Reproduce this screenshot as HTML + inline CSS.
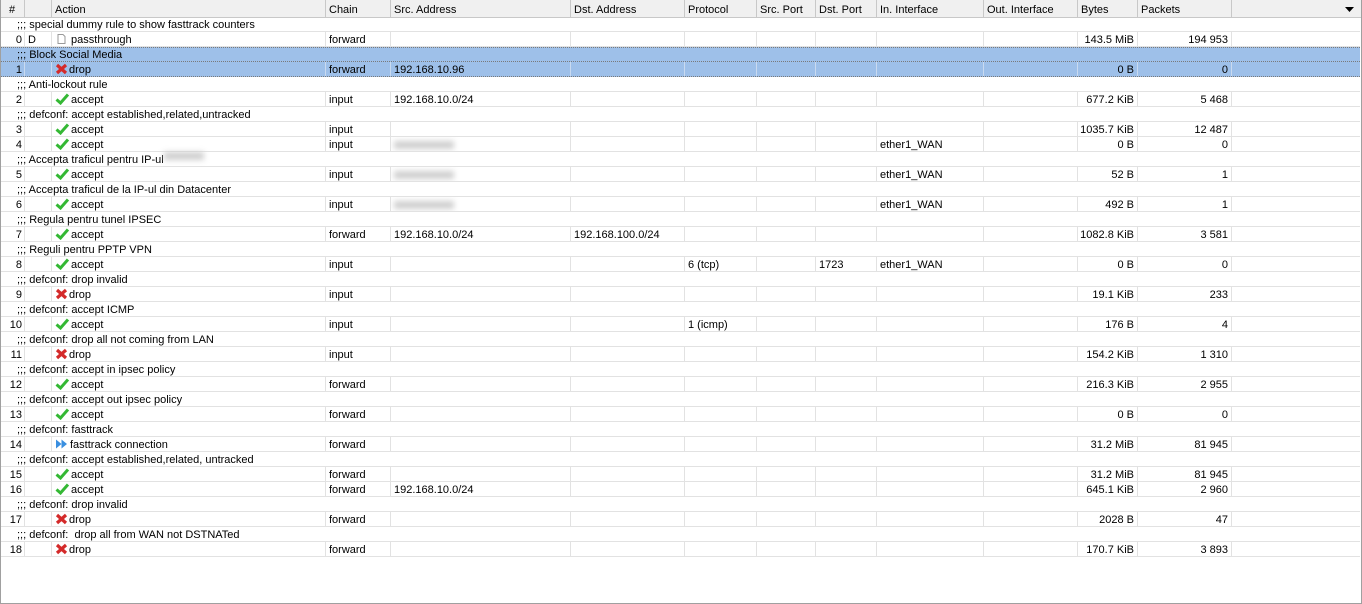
<!DOCTYPE html>
<html><head><meta charset="utf-8"><style>
*{box-sizing:border-box;margin:0;padding:0}
body{width:1362px;height:604px;background:#fff;font-family:"Liberation Sans",Tahoma,sans-serif;font-size:11px;color:#000;overflow:hidden;position:relative}
.frame{position:absolute;left:0;top:0;width:1362px;height:604px;border:1px solid #a0a0a0;border-top:none}
.h{position:absolute;left:0;top:0;height:18px;width:1362px;background:#f0f0f0;border-bottom:1px solid #c8c8c8;display:flex}
.h span{height:17px;line-height:21px;border-right:1px solid #c8c8c8;padding-left:3px;white-space:nowrap;overflow:hidden}
.rows{position:absolute;left:0;top:17px;width:1360px}
.r,.c{height:15px;display:flex;border-bottom:1px solid #e2e2e2;width:1360px}
.r span{height:14px;line-height:17px;border-right:1px solid #e2e2e2;padding-left:3px;white-space:nowrap;overflow:hidden;flex:none}
.c{line-height:16px;padding-left:17px;white-space:nowrap}
.s{background:#9ec0e9;border-bottom:1px dotted #7a7a7a}
.r.s span{border-right-color:#c9daf0}
.c.s{border-top:1px dotted #7a7a7a;line-height:14px}
.w0{width:25px;text-align:right;padding:0 2px 0 0!important}.w1{width:27px}.w2{width:274px}.w3{width:65px}.w4{width:180px}.w5{width:114px}.w6{width:72px}.w7{width:59px}.w8{width:61px}.w9{width:107px}.w10{width:94px}.w11{width:60px;text-align:right;padding:0 3px 0 0!important}.w12{width:94px;text-align:right;padding:0 3px 0 0!important}.w13{width:128px;border-right:none!important}
.a{padding-left:3px!important}
.a svg{vertical-align:-2px;margin-right:1px}
.blur{display:inline-block;width:60px;height:8px;background:#cfcfcf;filter:blur(3px);vertical-align:middle}
</style></head><body>
<div class="h"><span style="width:25px;text-align:center;padding:0">#</span><span style="width:27px"></span><span style="width:274px">Action</span><span style="width:65px">Chain</span><span style="width:180px">Src. Address</span><span style="width:114px">Dst. Address</span><span style="width:72px">Protocol</span><span style="width:59px">Src. Port</span><span style="width:61px">Dst. Port</span><span style="width:107px">In. Interface</span><span style="width:94px">Out. Interface</span><span style="width:60px">Bytes</span><span style="width:94px">Packets</span><span style="width:128px;border:none;position:relative"><svg style="position:absolute;right:6px;top:7px" width="9" height="6"><path d="M0 0H9L4.5 5Z" fill="#000"/></svg></span></div>
<div class="rows">
<div class="c">;;; special dummy rule to show fasttrack counters</div>
<div class="r"><span class="w0">0</span><span class="w1">D</span><span class="w2 a"><svg width="12" height="12"><path d="M3 1.5H8L10 3.5V10.5H3Z" fill="#fff" stroke="#9a9a9a"/></svg> passthrough</span><span class="w3">forward</span><span class="w4"></span><span class="w5"></span><span class="w6"></span><span class="w7"></span><span class="w8"></span><span class="w9"></span><span class="w10"></span><span class="w11">143.5 MiB</span><span class="w12">194 953</span><span class="w13"></span></div>
<div class="c s">;;; Block Social Media</div>
<div class="r s"><span class="w0">1</span><span class="w1"></span><span class="w2 a"><svg width="13" height="12"><path d="M2 2L11 10M11 2L2 10" stroke="#d42a2a" stroke-width="3.2"/></svg>drop</span><span class="w3">forward</span><span class="w4">192.168.10.96</span><span class="w5"></span><span class="w6"></span><span class="w7"></span><span class="w8"></span><span class="w9"></span><span class="w10"></span><span class="w11">0 B</span><span class="w12">0</span><span class="w13"></span></div>
<div class="c">;;; Anti-lockout rule</div>
<div class="r"><span class="w0">2</span><span class="w1"></span><span class="w2 a"><svg width="15" height="12"><path d="M1.5 6.5L5.5 10L13 1.5" stroke="#34b834" stroke-width="3" fill="none"/></svg>accept</span><span class="w3">input</span><span class="w4">192.168.10.0/24</span><span class="w5"></span><span class="w6"></span><span class="w7"></span><span class="w8"></span><span class="w9"></span><span class="w10"></span><span class="w11">677.2 KiB</span><span class="w12">5 468</span><span class="w13"></span></div>
<div class="c">;;; defconf: accept established,related,untracked</div>
<div class="r"><span class="w0">3</span><span class="w1"></span><span class="w2 a"><svg width="15" height="12"><path d="M1.5 6.5L5.5 10L13 1.5" stroke="#34b834" stroke-width="3" fill="none"/></svg>accept</span><span class="w3">input</span><span class="w4"></span><span class="w5"></span><span class="w6"></span><span class="w7"></span><span class="w8"></span><span class="w9"></span><span class="w10"></span><span class="w11">1035.7 KiB</span><span class="w12">12 487</span><span class="w13"></span></div>
<div class="r"><span class="w0">4</span><span class="w1"></span><span class="w2 a"><svg width="15" height="12"><path d="M1.5 6.5L5.5 10L13 1.5" stroke="#34b834" stroke-width="3" fill="none"/></svg>accept</span><span class="w3">input</span><span class="w4"><i class="blur"></i></span><span class="w5"></span><span class="w6"></span><span class="w7"></span><span class="w8"></span><span class="w9">ether1_WAN</span><span class="w10"></span><span class="w11">0 B</span><span class="w12">0</span><span class="w13"></span></div>
<div class="c">;;; Accepta traficul pentru IP-ul <i class="blur" style="width:40px"></i></div>
<div class="r"><span class="w0">5</span><span class="w1"></span><span class="w2 a"><svg width="15" height="12"><path d="M1.5 6.5L5.5 10L13 1.5" stroke="#34b834" stroke-width="3" fill="none"/></svg>accept</span><span class="w3">input</span><span class="w4"><i class="blur"></i></span><span class="w5"></span><span class="w6"></span><span class="w7"></span><span class="w8"></span><span class="w9">ether1_WAN</span><span class="w10"></span><span class="w11">52 B</span><span class="w12">1</span><span class="w13"></span></div>
<div class="c">;;; Accepta traficul de la IP-ul din Datacenter</div>
<div class="r"><span class="w0">6</span><span class="w1"></span><span class="w2 a"><svg width="15" height="12"><path d="M1.5 6.5L5.5 10L13 1.5" stroke="#34b834" stroke-width="3" fill="none"/></svg>accept</span><span class="w3">input</span><span class="w4"><i class="blur"></i></span><span class="w5"></span><span class="w6"></span><span class="w7"></span><span class="w8"></span><span class="w9">ether1_WAN</span><span class="w10"></span><span class="w11">492 B</span><span class="w12">1</span><span class="w13"></span></div>
<div class="c">;;; Regula pentru tunel IPSEC</div>
<div class="r"><span class="w0">7</span><span class="w1"></span><span class="w2 a"><svg width="15" height="12"><path d="M1.5 6.5L5.5 10L13 1.5" stroke="#34b834" stroke-width="3" fill="none"/></svg>accept</span><span class="w3">forward</span><span class="w4">192.168.10.0/24</span><span class="w5">192.168.100.0/24</span><span class="w6"></span><span class="w7"></span><span class="w8"></span><span class="w9"></span><span class="w10"></span><span class="w11">1082.8 KiB</span><span class="w12">3 581</span><span class="w13"></span></div>
<div class="c">;;; Reguli pentru PPTP VPN</div>
<div class="r"><span class="w0">8</span><span class="w1"></span><span class="w2 a"><svg width="15" height="12"><path d="M1.5 6.5L5.5 10L13 1.5" stroke="#34b834" stroke-width="3" fill="none"/></svg>accept</span><span class="w3">input</span><span class="w4"></span><span class="w5"></span><span class="w6">6 (tcp)</span><span class="w7"></span><span class="w8">1723</span><span class="w9">ether1_WAN</span><span class="w10"></span><span class="w11">0 B</span><span class="w12">0</span><span class="w13"></span></div>
<div class="c">;;; defconf: drop invalid</div>
<div class="r"><span class="w0">9</span><span class="w1"></span><span class="w2 a"><svg width="13" height="12"><path d="M2 2L11 10M11 2L2 10" stroke="#d42a2a" stroke-width="3.2"/></svg>drop</span><span class="w3">input</span><span class="w4"></span><span class="w5"></span><span class="w6"></span><span class="w7"></span><span class="w8"></span><span class="w9"></span><span class="w10"></span><span class="w11">19.1 KiB</span><span class="w12">233</span><span class="w13"></span></div>
<div class="c">;;; defconf: accept ICMP</div>
<div class="r"><span class="w0">10</span><span class="w1"></span><span class="w2 a"><svg width="15" height="12"><path d="M1.5 6.5L5.5 10L13 1.5" stroke="#34b834" stroke-width="3" fill="none"/></svg>accept</span><span class="w3">input</span><span class="w4"></span><span class="w5"></span><span class="w6">1 (icmp)</span><span class="w7"></span><span class="w8"></span><span class="w9"></span><span class="w10"></span><span class="w11">176 B</span><span class="w12">4</span><span class="w13"></span></div>
<div class="c">;;; defconf: drop all not coming from LAN</div>
<div class="r"><span class="w0">11</span><span class="w1"></span><span class="w2 a"><svg width="13" height="12"><path d="M2 2L11 10M11 2L2 10" stroke="#d42a2a" stroke-width="3.2"/></svg>drop</span><span class="w3">input</span><span class="w4"></span><span class="w5"></span><span class="w6"></span><span class="w7"></span><span class="w8"></span><span class="w9"></span><span class="w10"></span><span class="w11">154.2 KiB</span><span class="w12">1 310</span><span class="w13"></span></div>
<div class="c">;;; defconf: accept in ipsec policy</div>
<div class="r"><span class="w0">12</span><span class="w1"></span><span class="w2 a"><svg width="15" height="12"><path d="M1.5 6.5L5.5 10L13 1.5" stroke="#34b834" stroke-width="3" fill="none"/></svg>accept</span><span class="w3">forward</span><span class="w4"></span><span class="w5"></span><span class="w6"></span><span class="w7"></span><span class="w8"></span><span class="w9"></span><span class="w10"></span><span class="w11">216.3 KiB</span><span class="w12">2 955</span><span class="w13"></span></div>
<div class="c">;;; defconf: accept out ipsec policy</div>
<div class="r"><span class="w0">13</span><span class="w1"></span><span class="w2 a"><svg width="15" height="12"><path d="M1.5 6.5L5.5 10L13 1.5" stroke="#34b834" stroke-width="3" fill="none"/></svg>accept</span><span class="w3">forward</span><span class="w4"></span><span class="w5"></span><span class="w6"></span><span class="w7"></span><span class="w8"></span><span class="w9"></span><span class="w10"></span><span class="w11">0 B</span><span class="w12">0</span><span class="w13"></span></div>
<div class="c">;;; defconf: fasttrack</div>
<div class="r"><span class="w0">14</span><span class="w1"></span><span class="w2 a"><svg width="14" height="12"><path d="M1 1.5L6.5 6L1 10.5ZM6.5 1.5L12 6L6.5 10.5Z" fill="#3a8fe0"/></svg>fasttrack connection</span><span class="w3">forward</span><span class="w4"></span><span class="w5"></span><span class="w6"></span><span class="w7"></span><span class="w8"></span><span class="w9"></span><span class="w10"></span><span class="w11">31.2 MiB</span><span class="w12">81 945</span><span class="w13"></span></div>
<div class="c">;;; defconf: accept established,related, untracked</div>
<div class="r"><span class="w0">15</span><span class="w1"></span><span class="w2 a"><svg width="15" height="12"><path d="M1.5 6.5L5.5 10L13 1.5" stroke="#34b834" stroke-width="3" fill="none"/></svg>accept</span><span class="w3">forward</span><span class="w4"></span><span class="w5"></span><span class="w6"></span><span class="w7"></span><span class="w8"></span><span class="w9"></span><span class="w10"></span><span class="w11">31.2 MiB</span><span class="w12">81 945</span><span class="w13"></span></div>
<div class="r"><span class="w0">16</span><span class="w1"></span><span class="w2 a"><svg width="15" height="12"><path d="M1.5 6.5L5.5 10L13 1.5" stroke="#34b834" stroke-width="3" fill="none"/></svg>accept</span><span class="w3">forward</span><span class="w4">192.168.10.0/24</span><span class="w5"></span><span class="w6"></span><span class="w7"></span><span class="w8"></span><span class="w9"></span><span class="w10"></span><span class="w11">645.1 KiB</span><span class="w12">2 960</span><span class="w13"></span></div>
<div class="c">;;; defconf: drop invalid</div>
<div class="r"><span class="w0">17</span><span class="w1"></span><span class="w2 a"><svg width="13" height="12"><path d="M2 2L11 10M11 2L2 10" stroke="#d42a2a" stroke-width="3.2"/></svg>drop</span><span class="w3">forward</span><span class="w4"></span><span class="w5"></span><span class="w6"></span><span class="w7"></span><span class="w8"></span><span class="w9"></span><span class="w10"></span><span class="w11">2028 B</span><span class="w12">47</span><span class="w13"></span></div>
<div class="c">;;; defconf:&nbsp; drop all from WAN not DSTNATed</div>
<div class="r"><span class="w0">18</span><span class="w1"></span><span class="w2 a"><svg width="13" height="12"><path d="M2 2L11 10M11 2L2 10" stroke="#d42a2a" stroke-width="3.2"/></svg>drop</span><span class="w3">forward</span><span class="w4"></span><span class="w5"></span><span class="w6"></span><span class="w7"></span><span class="w8"></span><span class="w9"></span><span class="w10"></span><span class="w11">170.7 KiB</span><span class="w12">3 893</span><span class="w13"></span></div>
</div>
<div class="frame"></div>
</body></html>
